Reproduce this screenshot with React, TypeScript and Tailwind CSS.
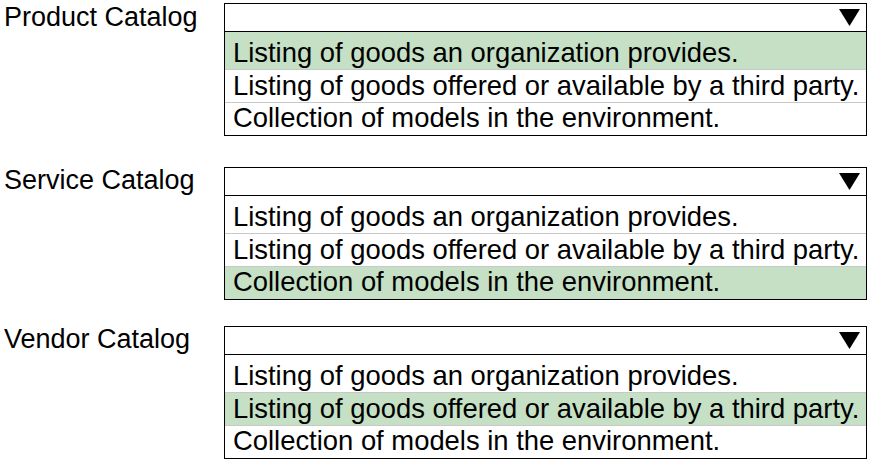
const options = [
  'Listing of goods an organization provides.',
  'Listing of goods offered or available by a third party.',
  'Collection of models in the environment.',
];

const catalogs = [
  { label: 'Product Catalog', selected: 0, mt: 'mt-[3px]' },
  { label: 'Service Catalog', selected: 2, mt: 'mt-[31px]' },
  { label: 'Vendor Catalog', selected: 1, mt: 'mt-[26px]' },
];

function Dropdown({ selected }: { selected: number }) {
  return (
    <div className="w-[643px] border border-black bg-white text-[27.4px]">
      {/* header with arrow */}
      <div className="h-[28px] border-b border-black flex items-center justify-end pr-[6px]">
        <svg width="21" height="17" viewBox="0 0 21 17">
          <polygon points="0,0 21,0 10.5,17" fill="black" />
        </svg>
      </div>
      {options.map((opt, i) => (
        <div
          key={i}
          className={`pl-[8px] flex items-center leading-none whitespace-nowrap overflow-hidden ${
            i === 0 ? 'h-[37px] pt-[5px]' : 'h-[33px] border-t border-[#c8c8c8]'
          } ${i === 2 ? 'pb-[3px]' : ''} ${i === selected ? 'bg-[#c5e0c5]' : 'bg-white'}`}
        >
          {opt}
        </div>
      ))}
    </div>
  );
}

export default function App() {
  return (
    <div className="w-[872px] h-[466px] bg-white text-black font-['Liberation_Sans',Arial,sans-serif] text-[27px]">
      {catalogs.map((c, i) => (
        <div key={c.label} className={`flex ${c.mt}`}>
          <div className={`w-[224px] pl-[4px] leading-none ${i === 0 ? 'pt-[1px]' : 'pt-0'}`}>{c.label}</div>
          <Dropdown selected={c.selected} />
        </div>
      ))}
    </div>
  );
}
